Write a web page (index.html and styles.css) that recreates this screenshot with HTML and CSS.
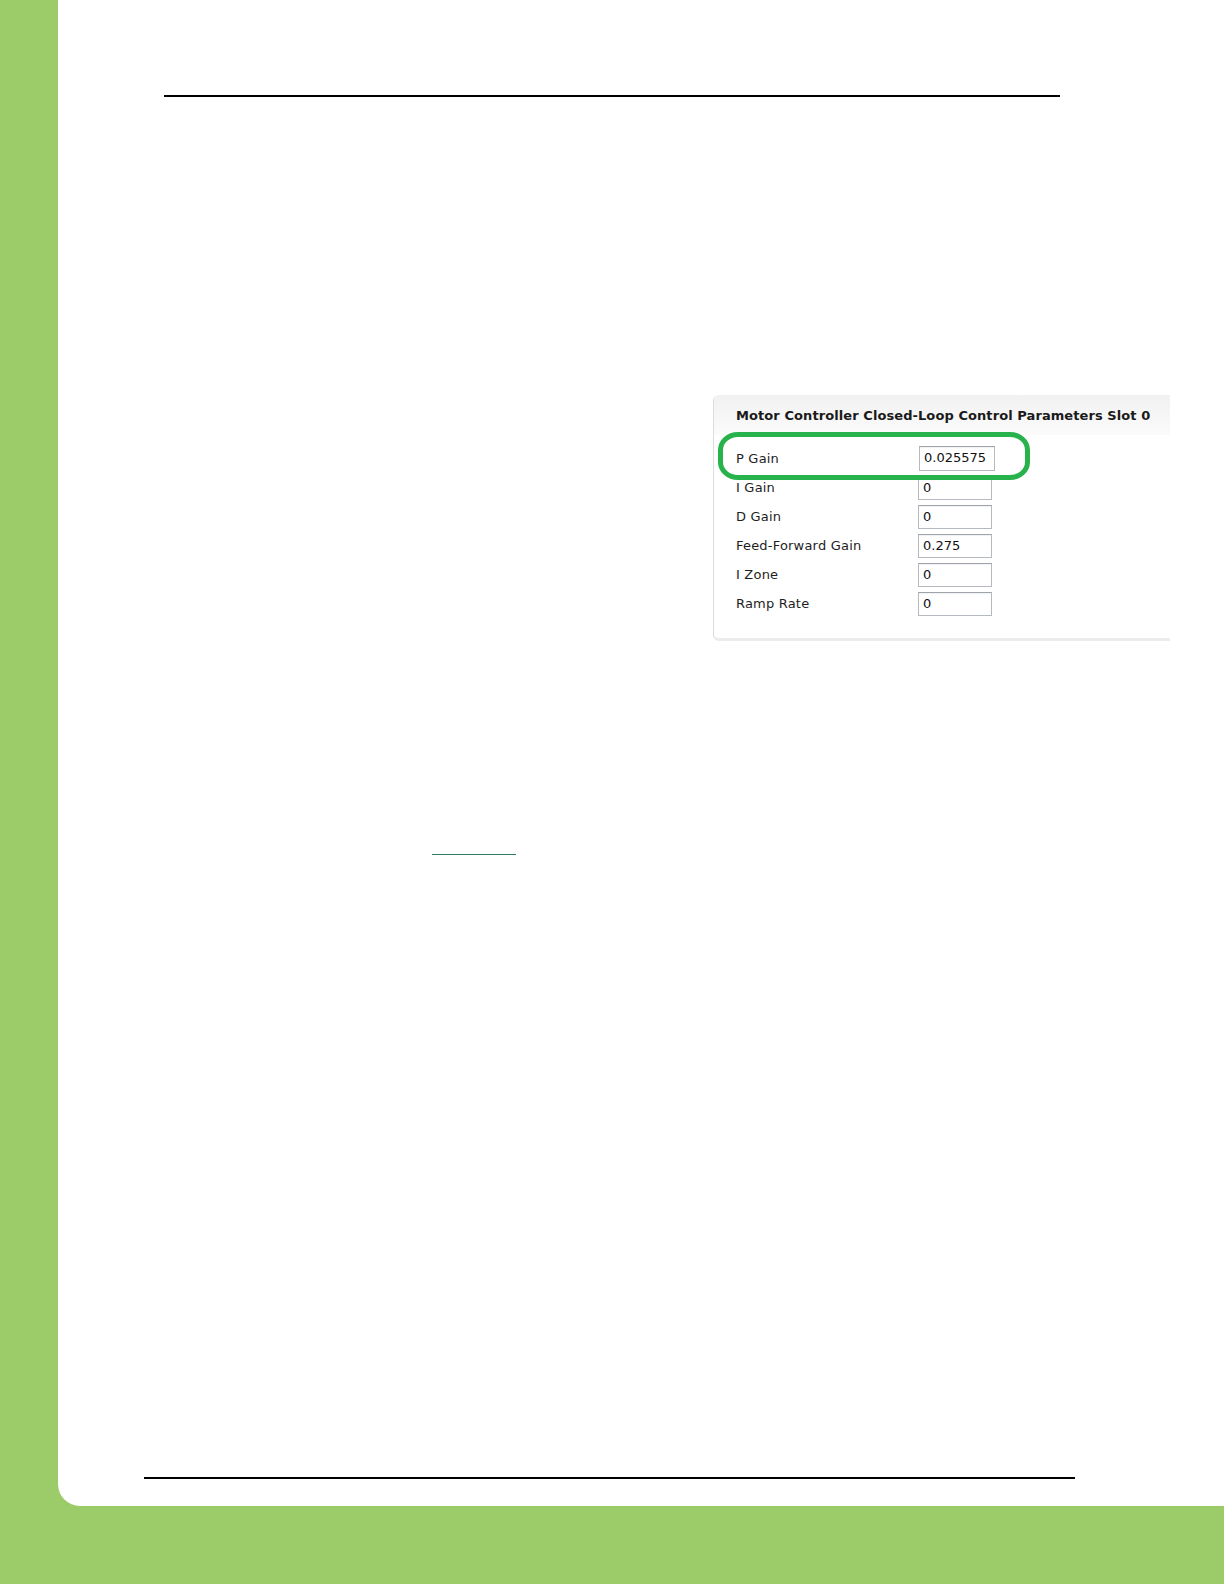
FILE: index.html
```html
<!DOCTYPE html>
<html lang="en">

<head>
    <meta charset="UTF-8">
    <meta name="viewport" content="width=device-width, initial-scale=1.0">
    <title>Closed-Loop Tuning</title>
    <link rel="stylesheet" href="styles.css">
</head>

<body>
    <div class="page">
        <div class="rule top"></div>

        <div class="figure">
            <div class="panel">
                <div class="panelHead">Motor Controller Closed-Loop Control Parameters Slot 0</div>
                <ul class="params">
                    <li>
                        <span class="label">P Gain</span>
                        <span class="box wide">0.025575</span>
                    </li>
                    <li>
                        <span class="label">I Gain</span>
                        <span class="box">0</span>
                    </li>
                    <li>
                        <span class="label">D Gain</span>
                        <span class="box">0</span>
                    </li>
                    <li>
                        <span class="label">Feed-Forward Gain</span>
                        <span class="box">0.275</span>
                    </li>
                    <li>
                        <span class="label">I Zone</span>
                        <span class="box">0</span>
                    </li>
                    <li>
                        <span class="label">Ramp Rate</span>
                        <span class="box">0</span>
                    </li>
                </ul>
                <!-- hand drawn highlight round P Gain -->
                <div class="mark"></div>
            </div>
        </div>

        <div class="linkRow">
            <a class="link" href="#">&nbsp;</a>
        </div>

        <div class="rule bottom"></div>
    </div>
</body>

</html>
```

FILE: styles.css
```css
* {
    margin: 0;
    padding: 0;
    box-sizing: border-box;
}

li {
    list-style: none;
}

html,
body {
    height: 100%;
}

body {
    background-color: #9bcc69;
    font-family: "DejaVu Sans", Verdana, sans-serif;
    overflow: hidden;
}

.page {
    display: flex;
    flex-direction: column;
    margin-left: 58px;
    height: 1506px;
    padding-top: 95px;
    padding-bottom: 27px;
    background-color: #fff;
    border-bottom-left-radius: 22px;
}

.rule {
    height: 2px;
    background-color: #000;
}

.rule.top {
    width: 896px;
    margin-left: 106px;
}

.rule.bottom {
    width: 931px;
    margin-left: 86px;
    margin-top: auto;
}

.figure {
    margin-top: 298px;
    margin-left: 655px;
}

.panel {
    position: relative;
    width: 457px;
    border-left: 1px solid #dcdcdc;
    border-bottom: 3px solid #ececec;
    border-top-left-radius: 6px;
    border-bottom-left-radius: 6px;
    padding-bottom: 20px;
}

.panelHead {
    height: 40px;
    line-height: 42px;
    padding-left: 22px;
    font-size: 13px;
    font-weight: bold;
    color: #1a1a1a;
    letter-spacing: 0.08px;
    background: linear-gradient(#f1f1f1, #fbfbfb);
    border-top-left-radius: 6px;
    white-space: nowrap;
}

.params {
    padding-top: 9px;
    padding-left: 22px;
}

.params li {
    display: flex;
    align-items: center;
    height: 29px;
}

.params .label {
    width: 182px;
    font-size: 13px;
    letter-spacing: 0.2px;
    color: #1e1e1e;
}

.params .box {
    width: 74px;
    height: 24px;
    line-height: 22px;
    padding-left: 4px;
    font-size: 13px;
    color: #111;
    background-color: #fff;
    border: 1px solid #b4bac0;
    border-top-color: #9ea4aa;
    box-shadow: inset 0 1px 1px rgba(0, 0, 0, .06);
}

.params .box.wide {
    width: 76px;
    height: 25px;
    margin-left: 1px;
}

.mark {
    position: absolute;
    left: 4px;
    top: 37px;
    width: 312px;
    height: 48px;
    border: 5px solid #27b24b;
    border-radius: 20px / 18px;
}

.linkRow {
    margin-top: 202px;
    padding-left: 374px;
}

.link {
    display: inline-block;
    width: 84px;
    height: 12px;
    border-bottom: 1px solid #2f7b5d;
    text-decoration: none;
}
```
